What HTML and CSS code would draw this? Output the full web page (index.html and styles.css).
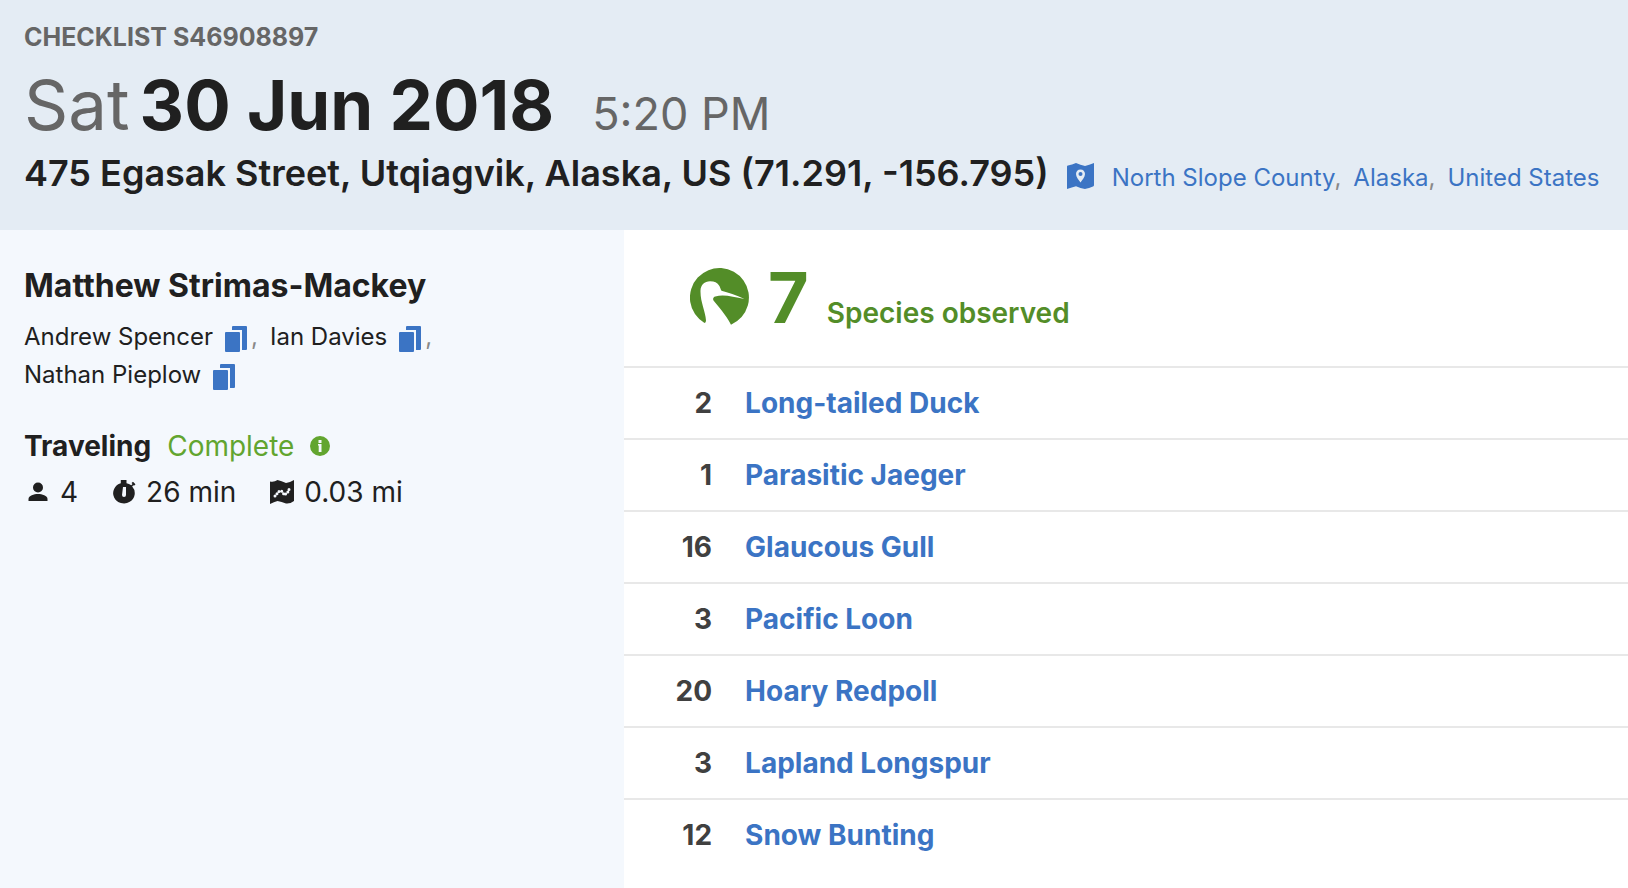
FILE: index.html
```html
<!DOCTYPE html>
<html lang="en">
<head>
<meta charset="utf-8">
<meta name="viewport" content="width=device-width, initial-scale=1">
<title>Checklist S46908897</title>
<link rel="stylesheet" href="styles.css">
</head>
<body>
<svg class="sprite" aria-hidden="true">
  <symbol id="copy" viewBox="0 0 22 26">
    <path d="M1 6h13a1 1 0 0 1 1 1v18a1 1 0 0 1-1 1H1a1 1 0 0 1-1-1V7a1 1 0 0 1 1-1z"/>
    <path d="M8 0h13a1 1 0 0 1 1 1v22a1 1 0 0 1-1 1h-4V4H7V1a1 1 0 0 1 1-1z"/>
  </symbol>
</svg>
<header class="header">
  <p class="checklist-id">CHECKLIST S46908897</p>
  <h1 class="date">
    <span class="weekday">Sat</span>
    <span class="day">30 Jun 2018</span>
    <time class="time">5:20 PM</time>
  </h1>
  <div class="place">
    <h2 class="address">475 Egasak Street, Utqiagvik, Alaska, US (71.291, -156.795)</h2>
    <a class="map-link" href="#map" aria-label="Map">
      <svg class="map-icon" viewBox="0 0 27 26"><path fill-rule="evenodd" d="M1 2.500Q5 1.700 9 0q4.500 2.200 9 3Q22 2 27 0v22q0 1-1 1.500-4 1.700-8 2.500-4.500-.8-9-2.800-4 1.200-9 2.800V3.500q0-.8 1-1zM13.500 6.500C10.800 6.500 9 8.500 9 11c0 3 2.800 6 4.500 8.500C15.200 17 18 14 18 11c0-2.500-1.800-4.500-4.500-4.500z"/><circle cx="13.500" cy="11" r="2"/></svg>
    </a>
    <nav class="regions" aria-label="Region"><span><a href="#county">North Slope County</a>,</span> <span><a href="#state">Alaska</a>,</span> <span><a href="#country">United States</a></span></nav>
  </div>
</header>
<div class="columns">
  <aside class="sidebar">
    <h2 class="owner">Matthew Strimas-Mackey</h2>
    <ul class="observers">
      <li>Andrew Spencer<a class="copy-link" href="#andrew" aria-label="Andrew Spencer's checklist"><svg class="copy-icon"><use href="#copy"/></svg></a><span class="comma">,</span></li>
      <li>Ian Davies<a class="copy-link" href="#ian" aria-label="Ian Davies's checklist"><svg class="copy-icon"><use href="#copy"/></svg></a><span class="comma">,</span></li>
      <li>Nathan Pieplow<a class="copy-link" href="#nathan" aria-label="Nathan Pieplow's checklist"><svg class="copy-icon"><use href="#copy"/></svg></a></li>
    </ul>
    <div class="protocol">
      <h3 class="protocol-name">Traveling</h3>
      <span class="complete">Complete</span>
      <button class="info" type="button" aria-label="About complete checklists">
        <svg class="info-icon" viewBox="0 0 20 20"><path fill-rule="evenodd" d="M10 0a10 10 0 1 1 0 20 10 10 0 0 1 0-20zM8.500 4v3h3V4zM8 8v1.500h.7V16h2.800V8z"/></svg>
      </button>
    </div>
    <ul class="stats">
      <li><svg class="stat-icon" viewBox="0 0 24 24"><circle cx="12" cy="7.500" r="5"/><path d="M2.500 21v-2c0-3.500 5.500-5 9.500-5s9.500 1.500 9.500 5v2z"/></svg>4</li>
      <li><svg class="stat-icon" viewBox="0 0 24 24"><path fill-rule="evenodd" d="M8.800 0h5.700v3.300q2.600.4 4.800 2L20.500 4l-1-1L21 1.800l2.500 2.500L22 5.800l-.8-.6-1 1.300A10.800 10.300 0 1 1 8.800 3.300zM11 7l-1 8a2 2 0 0 0 4 0V7z"/></svg>26 min</li>
      <li><svg class="stat-icon" viewBox="0 0 24 24"><path d="M0 1.500Q4 2.500 7.500 0q4 1 8.500 3 4-.5 8-3v21q-4 3-8 2.500-4.500-2-8.500-2.500Q4 22 0 24z"/><path class="trail" d="M5 16l4-4.500 2.500-.5 3 4 4-3.500 1-4"/></svg>0.03 mi</li>
    </ul>
  </aside>
  <main class="main">
    <h2 class="summary">
      <svg class="bird" viewBox="0 0 60 60"><path d="M14.500 55A29.500 29.500 0 1 1 41 56.700C36 47 28 38 23.500 32.500c-1-2 0-3.500 1.800-4C34 26 43 29 54.500 31 46 27 38 24.500 31.500 22.800 30 20 29.500 13.200 20 13.200c-5.500 0-9.200 3.500-9.500 9.300C10.200 34 15.500 43 16 52.500q0 2-1.500 2.500z"/></svg>
      <span class="total">7</span>
      <span class="total-label">Species observed</span>
    </h2>
    <ol class="species">
      <li><span class="count">2</span><a href="#lotduc">Long-tailed Duck</a></li>
      <li><span class="count">1</span><a href="#parjae">Parasitic Jaeger</a></li>
      <li><span class="count">16</span><a href="#glagul">Glaucous Gull</a></li>
      <li><span class="count">3</span><a href="#pacloo">Pacific Loon</a></li>
      <li><span class="count">20</span><a href="#hoared">Hoary Redpoll</a></li>
      <li><span class="count">3</span><a href="#laplon">Lapland Longspur</a></li>
      <li><span class="count">12</span><a href="#snobun">Snow Bunting</a></li>
    </ol>
  </main>
</div>
</body>
</html>
```
FILE: styles.css
```css
* { box-sizing: border-box; }

body {
  margin: 0;
  min-height: 100vh;
  display: flex;
  flex-direction: column;
  background: #fff;
  color: #202020;
  font-family: Inter, "Liberation Sans", sans-serif;
}

h1, h2, h3, p, ul, ol { margin: 0; padding: 0; }
ul, ol { list-style: none; }
a { color: #3b74c4; text-decoration: none; }
a:hover { text-decoration: underline; }
svg { display: block; fill: currentColor; }
.sprite { position: absolute; width: 0; height: 0; }

.header {
  padding: 22px 24px 35px;
  background: #e4ecf4;
}

.checklist-id {
  color: #666;
  font-size: 25px;
  font-weight: 700;
  line-height: 30px;
}

.date {
  display: flex;
  flex-wrap: wrap;
  align-items: baseline;
  margin-top: 12px;
  font-size: 69px;
  font-weight: 700;
  line-height: 82px;
}

.weekday, .time { color: #666; font-weight: 400; }
.day { margin: 0 38px 0 10px; }
.time { font-size: 45px; line-height: 50px; }

.place {
  display: flex;
  flex-wrap: wrap;
  align-items: baseline;
  margin-top: 5px;
}

.address { font-size: 36px; font-weight: 600; line-height: 44px; }
.map-link { align-self: center; margin: 6px 18px 0; }
.map-icon { width: 27px; height: 26px; }

.regions {
  display: flex;
  gap: 12px;
  color: #888;
  font-size: 24px;
  line-height: 28px;
}

.columns {
  flex: 1;
  display: grid;
  grid-template-columns: 23fr 37fr;
}

.sidebar {
  padding: 36px 24px;
  background: #f4f8fd;
}

.owner {
  font-size: 32px;
  font-weight: 700;
  line-height: 40px;
}

.observers {
  display: flex;
  flex-wrap: wrap;
  column-gap: 12px;
  max-width: 440px;
  margin-top: 12px;
  font-size: 24px;
  line-height: 38px;
}

.observers li { display: flex; align-items: center; }
.copy-link { margin: 4px 4px 0 12px; }
.copy-icon { width: 22px; height: 26px; }
.comma { color: #888; }

.protocol {
  display: flex;
  align-items: center;
  margin-top: 32px;
  font-size: 28px;
  line-height: 40px;
}

.protocol-name { margin-right: 16px; font-size: 28px; font-weight: 700; }
.complete { color: #62a52f; }

.info {
  margin-left: 16px;
  padding: 0;
  border: 0;
  background: none;
  color: #62a52f;
}

.info-icon { width: 20px; height: 20px; }

.stats {
  display: flex;
  gap: 34px;
  margin-top: 6px;
  padding-left: 2px;
  font-size: 28px;
  line-height: 40px;
}

.stats li { display: flex; align-items: center; gap: 10px; }
.stat-icon { width: 24px; height: 24px; }
.trail { fill: none; stroke: #f4f8fd; stroke-dasharray: 0 3; stroke-linecap: round; stroke-width: 3; }

.summary {
  display: flex;
  align-items: baseline;
  padding: 28px 24px 28px 66px;
  color: #538d28;
}

.bird { align-self: center; width: 60px; height: 60px; margin-right: 18px; }
.total { margin-right: 18px; font-size: 70px; font-weight: 700; line-height: 80px; }
.total-label { font-size: 28px; font-weight: 600; line-height: 40px; }

.species li {
  display: grid;
  grid-template-columns: 88px 1fr;
  column-gap: 33px;
  padding: 15px 24px 15px 0;
  border-top: 2px solid #e8e8e8;
  font-size: 28px;
  font-weight: 700;
  line-height: 40px;
}

.count { color: #404040; text-align: right; }
```
